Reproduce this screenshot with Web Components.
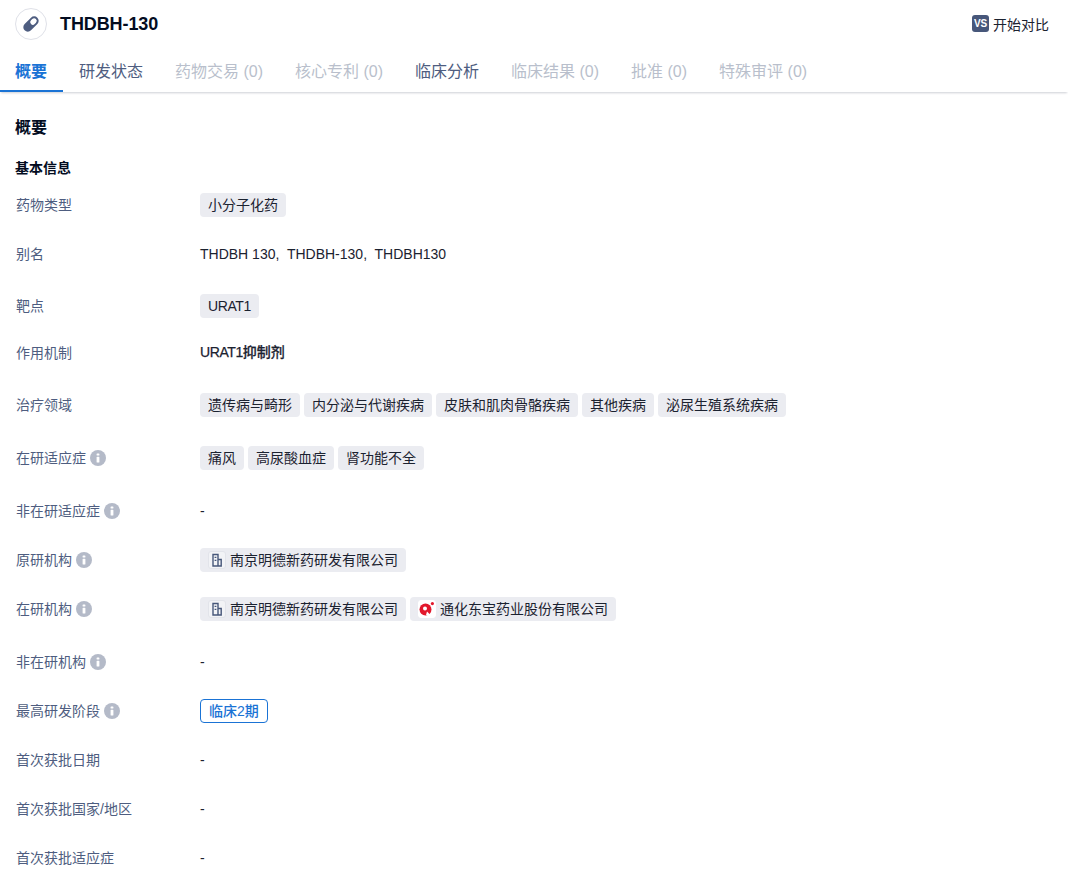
<!DOCTYPE html>
<html lang="zh"><head><meta charset="utf-8"><title>THDBH-130</title>
<style>
html,body{margin:0;background:#fff}
body{font-family:"Liberation Sans","Noto Sans CJK SC",sans-serif;width:1068px;height:888px;overflow:hidden}
</style></head><body>
<drug-page></drug-page>
<script>
const def=(name,html,cls)=>{customElements.define(name,class extends HTMLElement{
  constructor(){super();this.attachShadow({mode:'open'}).innerHTML=html;}
  connectedCallback(){cls&&cls(this)}
})};
def('drug-header',`<style>
:host{display:flex;align-items:center;height:48px;padding:0 19px 0 15px;box-sizing:border-box}
.ic{width:32px;height:32px;border:1px solid #dfe1e8;border-radius:50%;box-sizing:border-box;display:flex;align-items:center;justify-content:center}
h1{margin:0 0 0 13px;font-size:18px;font-weight:700;color:#030c1f;line-height:24px;letter-spacing:-.1px}
.cmp{margin-left:auto;display:flex;align-items:center;font-size:14px;color:#1b2230;padding-bottom:1px}
.vs{width:17px;height:17px;border-radius:3px;background:#47577a;color:#fff;font-size:10px;font-weight:700;display:flex;align-items:center;justify-content:center;margin-right:4px;letter-spacing:-.2px}
</style><div class="ic"><svg width="20" height="20" viewBox="0 0 20 20"><g transform="rotate(-45 10 10)"><rect x="1" y="5.5" width="18" height="9" rx="4.5" fill="#4e5d80"/><rect x="10" y="7.4" width="7" height="5.2" rx="2.6" fill="#fff"/></g></svg></div><h1><slot></slot></h1><div class="cmp"><span class="vs">VS</span>开始对比</div>`);
def('tab-item',`<style>
:host{display:block;padding:0 16px;height:32px;line-height:24px;font-size:16px;color:#b9bfcc;box-sizing:border-box;white-space:nowrap}
:host([on]){color:#4e5d80}
:host([active]){color:#1a73d5;font-weight:700;padding-left:15px;border-bottom:2px solid #1a73d5;}
</style><slot></slot>`);
def('tab-bar',`<style>
:host{display:flex;height:32px;margin-top:12px;box-shadow:0 2px 2px -1px rgba(30,40,70,.22);box-sizing:border-box}
</style><slot></slot>`);
def('info-row',`<style>
:host{display:grid;grid-template-columns:184px 1fr;padding-left:16px;box-sizing:border-box;align-items:start}
.l{font-size:14px;line-height:24px;height:24px;color:#4e5d80;display:flex;align-items:center;white-space:nowrap}
.v{font-size:14px;line-height:24px;color:#1b2230;display:flex;gap:4px;min-height:24px;white-space:nowrap}
.i{display:none;margin-left:4px}
:host([info]) .i{display:block}
</style><div class="l"><span class="t"></span><svg class="i" width="16" height="16" viewBox="0 0 16 16"><circle cx="8" cy="8" r="8" fill="#b4bac8"/><rect x="6.6" y="3.4" width="2.8" height="2.2" rx=".6" fill="#fff"/><rect x="6.6" y="6.8" width="2.8" height="5.8" rx=".6" fill="#fff"/></svg></div><div class="v"><slot></slot></div>`,
e=>{e.shadowRoot.querySelector('.t').textContent=e.getAttribute('label');e.style.height=e.getAttribute('h')+'px'});
def('tag-chip',`<style>
:host{display:flex;align-items:center;height:24px;padding:0 8px;background:#ebecf1;border-radius:4px;font-size:14px;line-height:24px;color:#1b2230;box-sizing:border-box;white-space:nowrap}
:host([blue]){background:#fff;border:1px solid #1a73d5;color:#1a73d5;font-weight:500}
</style><slot></slot>`);
def('org-chip',`<style>
:host{display:flex;align-items:center;height:24px;padding:0 8px;background:#ebecf1;border-radius:4px;font-size:14px;color:#1b2230;white-space:nowrap}
.x{width:18px;height:18px;margin-right:4px;border-radius:3px;background:#f2f3f6;box-sizing:border-box;border:1px solid #e2e4ea;display:flex;align-items:center;justify-content:center}
.p{display:none}
:host([logo]) .b{display:none}
:host([logo]) .p{display:block}
:host([logo]) .x{background:#fff;border-color:#fff}
</style><span class="x"><svg class="b" width="12" height="14" viewBox="0 0 12 14" fill="none" stroke="#47577a" stroke-width="1.4"><path d="M2 13V1.5h5V13zM7 6.5h3.2V13H7"/><path d="M3.6 4.4h1.8M3.6 7.4h1.8"/></svg><svg class="p" width="16" height="16" viewBox="0 0 16 16"><circle cx="6.5" cy="8.5" r="6" fill="#e2182c"/><circle cx="6" cy="7.6" r="2" fill="#fff"/><path d="M8 10.5l3.5 3.5H7z" fill="#fff"/><circle cx="13.4" cy="2.6" r="1.6" fill="#e2182c"/></svg></span><slot></slot>`);
def('drug-page',`<style>
:host{display:block}
h2{margin:24px 0 0 15px;font-size:16px;line-height:24px;font-weight:700;color:#030c1f}
h3{margin:20px 0 17px 15px;font-size:14px;line-height:16px;font-weight:700;color:#030c1f}
.b{font-weight:500;margin-top:-1px;-webkit-text-stroke:.25px #1b2230}
.k{letter-spacing:-.4px}
</style>
<drug-header>THDBH-130</drug-header>
<tab-bar><tab-item active>概要</tab-item><tab-item on>研发状态</tab-item><tab-item>药物交易 (0)</tab-item><tab-item>核心专利 (0)</tab-item><tab-item on>临床分析</tab-item><tab-item>临床结果 (0)</tab-item><tab-item>批准 (0)</tab-item><tab-item>特殊审评 (0)</tab-item></tab-bar>
<h2>概要</h2>
<h3>基本信息</h3>
<info-row label="药物类型" h="49"><tag-chip>小分子化药</tag-chip></info-row>
<info-row label="别名" h="52">THDBH 130,&nbsp; THDBH-130,&nbsp; THDBH130</info-row>
<info-row label="靶点" h="47"><tag-chip><span class="k">URAT1</span></tag-chip></info-row>
<info-row label="作用机制" h="52"><span class="b"><span class="k">URAT1</span>抑制剂</span></info-row>
<info-row label="治疗领域" h="53"><tag-chip>遗传病与畸形</tag-chip><tag-chip>内分泌与代谢疾病</tag-chip><tag-chip>皮肤和肌肉骨骼疾病</tag-chip><tag-chip>其他疾病</tag-chip><tag-chip>泌尿生殖系统疾病</tag-chip></info-row>
<info-row label="在研适应症" info h="53"><tag-chip>痛风</tag-chip><tag-chip>高尿酸血症</tag-chip><tag-chip>肾功能不全</tag-chip></info-row>
<info-row label="非在研适应症" info h="49">-</info-row>
<info-row label="原研机构" info h="49"><org-chip>南京明德新药研发有限公司</org-chip></info-row>
<info-row label="在研机构" info h="53"><org-chip>南京明德新药研发有限公司</org-chip><org-chip logo>通化东宝药业股份有限公司</org-chip></info-row>
<info-row label="非在研机构" info h="49">-</info-row>
<info-row label="最高研发阶段" info h="49"><tag-chip blue>临床2期</tag-chip></info-row>
<info-row label="首次获批日期" h="49">-</info-row>
<info-row label="首次获批国家/地区" h="49">-</info-row>
<info-row label="首次获批适应症" h="30">-</info-row>`);
</script>
</body></html>
